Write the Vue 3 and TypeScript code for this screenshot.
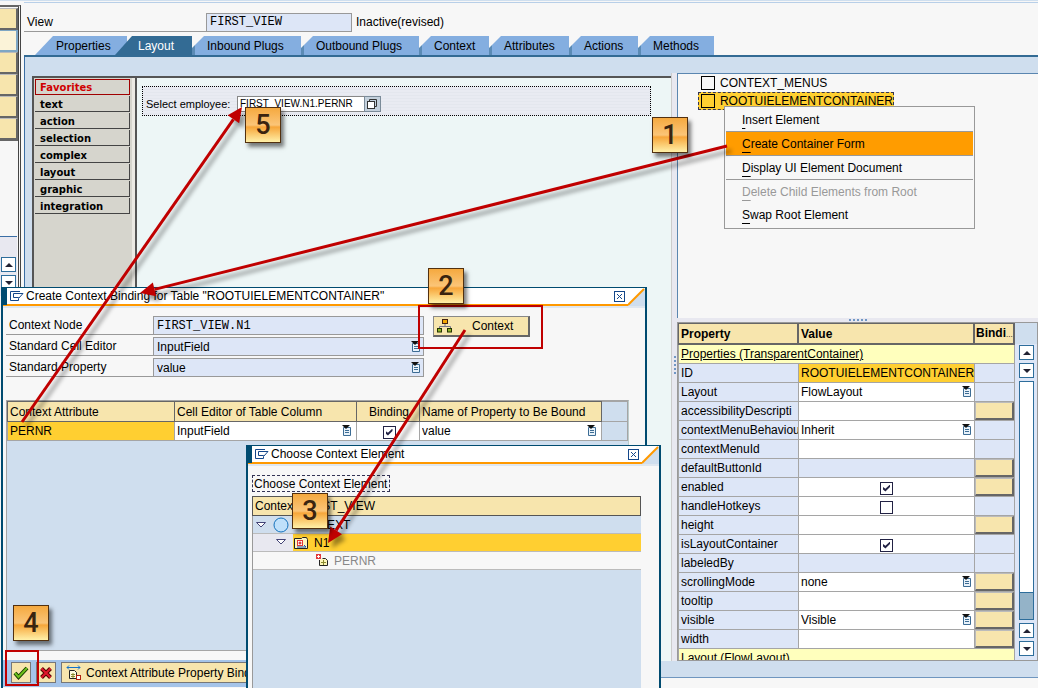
<script setup lang="ts">
import { ref } from 'vue'

interface PropertyRow {
  name: string
  kind: 'id' | 'select' | 'text' | 'check' | 'none'
  value?: string
  checked?: boolean
  bind: boolean
}

interface MenuEntry {
  label: string
  state?: 'active' | 'disabled'
  ruled?: boolean
}

const tabs = ['Properties', 'Layout', 'Inbound Plugs', 'Outbound Plugs', 'Context', 'Attributes', 'Actions', 'Methods']
const activeTab = ref('Layout')

const palette = ['Favorites', 'text', 'action', 'selection', 'complex', 'layout', 'graphic', 'integration']

const menu: MenuEntry[] = [
  { label: 'Insert Element', ruled: true },
  { label: 'Create Container Form', state: 'active', ruled: true },
  { label: 'Display UI Element Document', ruled: true },
  { label: 'Delete Child Elements from Root', state: 'disabled' },
  { label: 'Swap Root Element' },
]

const rows: PropertyRow[] = [
  { name: 'ID', kind: 'id', value: 'ROOTUIELEMENTCONTAINER', bind: false },
  { name: 'Layout', kind: 'select', value: 'FlowLayout', bind: false },
  { name: 'accessibilityDescripti', kind: 'text', bind: true },
  { name: 'contextMenuBehaviou', kind: 'select', value: 'Inherit', bind: false },
  { name: 'contextMenuId', kind: 'text', bind: false },
  { name: 'defaultButtonId', kind: 'none', bind: true },
  { name: 'enabled', kind: 'check', checked: true, bind: true },
  { name: 'handleHotkeys', kind: 'check', checked: false, bind: false },
  { name: 'height', kind: 'text', bind: true },
  { name: 'isLayoutContainer', kind: 'check', checked: true, bind: false },
  { name: 'labeledBy', kind: 'none', bind: false },
  { name: 'scrollingMode', kind: 'select', value: 'none', bind: true },
  { name: 'tooltip', kind: 'text', bind: true },
  { name: 'visible', kind: 'select', value: 'Visible', bind: true },
  { name: 'width', kind: 'text', bind: true },
]

const steps = [
  { n: 1, x: 652, y: 117 },
  { n: 2, x: 428, y: 268 },
  { n: 3, x: 292, y: 493 },
  { n: 4, x: 13, y: 605 },
  { n: 5, x: 245, y: 107 },
]

const arrows = [
  { x1: 727, y1: 146, x2: 140, y2: 293 },
  { x1: 22, y1: 422, x2: 242, y2: 107 },
  { x1: 465, y1: 330, x2: 328, y2: 543 },
].map((a) => {
  const len = Math.hypot(a.x2 - a.x1, a.y2 - a.y1)
  const ux = (a.x2 - a.x1) / len
  const uy = (a.y2 - a.y1) / len
  const bx = a.x2 - ux * 15
  const by = a.y2 - uy * 15
  return {
    ...a,
    bx,
    by,
    head: `${a.x2},${a.y2} ${bx - uy * 7},${by + ux * 7} ${bx + uy * 7},${by - ux * 7}`,
  }
})
</script>

<template>
  <div class="page">
    <aside class="rail">
      <div class="rail-buttons">
        <button v-for="n in 6" :key="n" type="button" :class="{ lit: n === 2 }" :aria-label="'Tool ' + n"></button>
      </div>
      <div class="rail-scroll">
        <button type="button" class="arrow up" aria-label="Scroll up"></button>
        <button type="button" class="arrow down" aria-label="Scroll down"></button>
      </div>
    </aside>

    <main class="main">
      <header class="view-row">
        <label for="view">View</label>
        <input id="view" class="mono" type="text" value="FIRST_VIEW" readonly />
        <span>Inactive(revised)</span>
      </header>

      <nav class="tabs">
        <button v-for="t in tabs" :key="t" type="button" :class="{ active: t === activeTab }" @click="activeTab = t">{{ t }}</button>
      </nav>

      <section class="bench">
        <div class="designer">
          <div class="palette">
            <button v-for="(p, i) in palette" :key="p" type="button" :class="{ fav: i === 0 }">{{ p }}</button>
          </div>
          <div class="canvas">
            <div class="container-box">
              <label for="emp">Select employee:</label>
              <input id="emp" type="text" value="FIRST_VIEW.N1.PERNR" />
              <button type="button" aria-label="Value help">
                <svg width="12" height="12" viewBox="0 0 12 12"><path d="M3.500 3V1.500h7v7H9" fill="none" stroke="#333" /><rect x="1.500" y="3.500" width="7" height="7" fill="#fff" stroke="#333" /></svg>
              </button>
            </div>
          </div>
        </div>

        <div class="v-split"><i></i></div>

        <div class="side">
          <div class="tree">
            <div class="tree-row"><span class="box"></span>CONTEXT_MENUS</div>
            <div class="tree-row selected"><span class="box"></span>ROOTUIELEMENTCONTAINER</div>
            <div class="menu" role="menu">
              <button v-for="m in menu" :key="m.label" type="button" role="menuitem" :class="[m.state, { ruled: m.ruled }]" :disabled="m.state === 'disabled'">
                <u>{{ m.label[0] }}</u>{{ m.label.slice(1) }}
              </button>
            </div>
          </div>
          <div class="h-split"><i></i></div>
          <div class="props">
            <table>
              <colgroup><col class="c-name" /><col /><col class="c-bind" /></colgroup>
              <thead>
                <tr><th>Property</th><th>Value</th><th>Bindi<small>...</small></th></tr>
              </thead>
              <tbody>
                <tr class="group"><td colspan="3"><span>Properties (TransparentContainer)</span></td></tr>
                <tr v-for="r in rows" :key="r.name">
                  <td :id="'p-' + r.name" class="name">{{ r.name }}</td>
                  <td v-if="r.kind === 'id'" class="id">{{ r.value }}</td>
                  <td v-else-if="r.kind === 'select'" class="edit">
                    <span class="pick">
                      <select :aria-labelledby="'p-' + r.name"><option>{{ r.value }}</option></select>
                      <svg width="10" height="12" viewBox="0 0 10 12"><path d="M1.500 2.500V10.500H8.500V2.500z" fill="#e8f2fa" stroke="#3c6c94" /><path d="M0 0h8L4 4z" fill="#111" /><path d="M3 5.500h4M3 7.500h4" stroke="#3c6c94" /></svg>
                    </span>
                  </td>
                  <td v-else-if="r.kind === 'check'" class="edit center"><input type="checkbox" :checked="r.checked" :aria-labelledby="'p-' + r.name" /></td>
                  <td v-else-if="r.kind === 'text'" class="edit"><input type="text" :aria-labelledby="'p-' + r.name" /></td>
                  <td v-else></td>
                  <td class="bind"><button v-if="r.bind" type="button" :aria-label="'Bind ' + r.name"></button></td>
                </tr>
                <tr class="group"><td colspan="3"><span>Layout (FlowLayout)</span></td></tr>
              </tbody>
            </table>
            <div class="scroll">
              <button type="button" class="arrow up" aria-label="Scroll up"></button>
              <button type="button" class="arrow down" aria-label="Scroll down"></button>
              <div class="track"><div class="thumb"></div></div>
              <button type="button" class="arrow up" aria-label="Scroll up"></button>
              <button type="button" class="arrow down" aria-label="Scroll down"></button>
            </div>
          </div>
        </div>
      </section>
    </main>

    <section class="dialog binding" role="dialog" aria-label="Create Context Binding">
      <header class="title">
        <b></b>
        <div class="bar">
          <svg width="15" height="12" viewBox="0 0 15 12" fill="none" stroke="#14478a"><path d="M11 1.500H1.500v9h8V9" /><path d="M4.500 3.500h9.500L9.500 8.500V7.500h-5z" fill="#fff" /></svg>
          <span>Create Context Binding for Table "ROOTUIELEMENTCONTAINER"</span>
          <button type="button" aria-label="Close"><svg width="11" height="11" viewBox="0 0 11 11"><path d="M3 3l5 5M8 3l-5 5" stroke="#14478a" /></svg></button>
        </div>
        <svg class="corner" width="17" height="18" viewBox="0 0 17 18"><path d="M0 0H17L0 17z" fill="#fff" /><path d="M0 17L16 1" stroke="#f90" stroke-width="2" /></svg>
      </header>
      <div class="form">
        <div class="fields">
          <div class="field"><label for="node">Context Node</label><input id="node" class="mono" type="text" value="FIRST_VIEW.N1" readonly /></div>
          <div class="field">
            <label for="editor">Standard Cell Editor</label>
            <span class="pick"><select id="editor"><option>InputField</option></select><svg width="10" height="12" viewBox="0 0 10 12"><path d="M1.500 2.500V10.500H8.500V2.500z" fill="#e8f2fa" stroke="#3c6c94" /><path d="M0 0h8L4 4z" fill="#111" /><path d="M3 5.500h4M3 7.500h4" stroke="#3c6c94" /></svg></span>
          </div>
          <div class="field">
            <label for="prop">Standard Property</label>
            <span class="pick"><select id="prop"><option>value</option></select><svg width="10" height="12" viewBox="0 0 10 12"><path d="M1.500 2.500V10.500H8.500V2.500z" fill="#e8f2fa" stroke="#3c6c94" /><path d="M0 0h8L4 4z" fill="#111" /><path d="M3 5.500h4M3 7.500h4" stroke="#3c6c94" /></svg></span>
          </div>
        </div>
        <button type="button" class="context-btn">
          <svg width="16" height="14" viewBox="0 0 16 14"><path d="M8 5v3M2.500 9.500V7.500h11v2" fill="none" stroke="#778" /><rect x="5.500" y=".5" width="5" height="4" fill="#f5a800" stroke="#421" /><rect x=".5" y="9.500" width="4" height="3.500" fill="#8fb52a" stroke="#230" /><rect x="10.500" y="9.500" width="4" height="3.500" fill="#8fb52a" stroke="#230" /></svg>
          <span>Context</span>
        </button>
      </div>
      <div class="grid-area">
        <table>
          <thead>
            <tr><th class="g1">Context Attribute</th><th class="g2">Cell Editor of Table Column</th><th class="g3">Binding</th><th class="g4">Name of Property to Be Bound</th><td></td></tr>
          </thead>
          <tbody>
            <tr>
              <td class="key">PERNR</td>
              <td class="edit"><span class="pick"><select aria-label="Cell Editor of Table Column"><option>InputField</option></select><svg width="10" height="12" viewBox="0 0 10 12"><path d="M1.500 2.500V10.500H8.500V2.500z" fill="#e8f2fa" stroke="#3c6c94" /><path d="M0 0h8L4 4z" fill="#111" /><path d="M3 5.500h4M3 7.500h4" stroke="#3c6c94" /></svg></span></td>
              <td class="edit center"><input type="checkbox" checked aria-label="Binding" /></td>
              <td class="edit"><span class="pick"><select aria-label="Name of Property to Be Bound"><option>value</option></select><svg width="10" height="12" viewBox="0 0 10 12"><path d="M1.500 2.500V10.500H8.500V2.500z" fill="#e8f2fa" stroke="#3c6c94" /><path d="M0 0h8L4 4z" fill="#111" /><path d="M3 5.500h4M3 7.500h4" stroke="#3c6c94" /></svg></span></td>
              <td></td>
            </tr>
          </tbody>
        </table>
      </div>
      <footer class="actions">
        <button type="button" aria-label="Continue">
          <svg width="16" height="14" viewBox="0 0 16 14"><path d="M2 7l3.500 4L14 2" fill="none" stroke="#143c00" stroke-width="4" /><path d="M2 7l3.500 4L14 2" fill="none" stroke="#6cc01c" stroke-width="2" /></svg>
        </button>
        <button type="button" aria-label="Cancel">
          <svg width="12" height="12" viewBox="0 0 12 12"><path d="M1.500 1.500l9 9M10.500 1.500l-9 9" stroke="#500" stroke-width="4" /><path d="M1.500 1.500l9 9M10.500 1.500l-9 9" stroke="#e0162c" stroke-width="2" /></svg>
        </button>
        <button type="button" class="wide">
          <svg width="16" height="15" viewBox="0 0 16 15"><path d="M1 2.500h13M3 .5l-2 2 2 2M12 .5l2 2-2 2" fill="none" stroke="#1473c8" /><path d="M3.500 5.500h5l2 2v6h-7z" fill="#fdfbe0" stroke="#222" /><path d="M5 9.500h4M5 11.500h4M7 8v5" stroke="#8a8a30" /><rect x="10.500" y="10.500" width="4" height="4" fill="#fff" stroke="#b02010" /></svg>
          <span>Context Attribute Property Binding</span>
        </button>
      </footer>
    </section>

    <section class="dialog chooser" role="dialog" aria-label="Choose Context Element">
      <header class="title">
        <b></b>
        <div class="bar">
          <svg width="15" height="12" viewBox="0 0 15 12" fill="none" stroke="#14478a"><path d="M11 1.500H1.500v9h8V9" /><path d="M4.500 3.500h9.500L9.500 8.500V7.500h-5z" fill="#fff" /></svg>
          <span>Choose Context Element</span>
          <button type="button" aria-label="Close"><svg width="11" height="11" viewBox="0 0 11 11"><path d="M3 3l5 5M8 3l-5 5" stroke="#14478a" /></svg></button>
        </div>
        <svg class="corner" width="17" height="18" viewBox="0 0 17 18"><path d="M0 0H17L0 17z" fill="#fff" /><path d="M0 17L16 1" stroke="#f90" stroke-width="2" /></svg>
      </header>
      <div class="chooser-body">
        <span class="caption">Choose Context Element</span>
        <div class="nodes">
          <div class="node-head">Context: FIRST_VIEW</div>
          <div class="node root">
            <svg width="12" height="10" viewBox="0 0 12 10"><path d="M1.500 2.500h9L6 7z" fill="#fff" stroke="#447" /></svg>
            <svg class="circle" width="16" height="16" viewBox="0 0 16 16"><circle cx="8" cy="8" r="7" fill="#bfe0fa" stroke="#1572bc" /></svg>
            <span>CONTEXT</span>
          </div>
          <div class="node n1">
            <i><svg width="12" height="10" viewBox="0 0 12 10"><path d="M1.500 2.500h9L6 7z" fill="#fff" stroke="#447" /></svg></i>
            <div>
              <svg width="16" height="14" viewBox="0 0 16 14"><path d="M1.500 12.500v-10h7l1-1h4l1 2v9z" fill="#fff6c0" stroke="#222" /><rect x="4.500" y="4.500" width="5" height="5" fill="#fff" stroke="#e23a3a" /><path d="M7 5.500v3M5.500 7h3" stroke="#c00" /><path d="M4 11h9M11 9l2 2" stroke="#1453b8" /></svg>
              <span>N1</span>
            </div>
          </div>
          <div class="node leaf">
            <svg width="13" height="13" viewBox="0 0 13 13"><rect width="5" height="5" fill="#e23a3a" /><path d="M2.500 1v3M1 2.500h3" stroke="#fff" /><path d="M3.500 6v5.500h8v-5l-2-2H6.500" fill="#fdf6b8" stroke="#222" /><path d="M5 8.500h5M7.500 6v5" stroke="#8a8a30" /></svg>
            <span>PERNR</span>
          </div>
        </div>
      </div>
    </section>

    <svg class="marks" aria-hidden="true">
      <g fill="none" stroke="#c00000" stroke-width="2">
        <rect x="419" y="306" width="123" height="42" />
        <rect x="6" y="651" width="32" height="34" />
      </g>
      <g class="arrows">
        <g v-for="(a, i) in arrows" :key="i">
          <line :x1="a.x1" :y1="a.y1" :x2="a.bx" :y2="a.by" stroke="#c00000" stroke-width="3" />
          <polygon :points="a.head" fill="#c00000" />
        </g>
      </g>
    </svg>
    <div v-for="s in steps" :key="s.n" class="badge" :style="{ left: s.x + 'px', top: s.y + 'px' }">{{ s.n }}</div>
  </div>
</template>

<style>
body { margin: 0; }
</style>

<style scoped>
* { box-sizing: border-box; }
.page {
  position: relative; display: flex; height: 100vh; overflow: hidden; background: #f7f7f7; color: #000;
  font: 12px/16px "Liberation Sans", Arial, sans-serif;
  border-top: 1px solid #cfdfef;
}
button, input, select { font: inherit; color: inherit; margin: 0; padding: 0; border: 0; border-radius: 0; background: none; appearance: none; outline: 0; }
button { cursor: pointer; }
svg { display: block; flex: none; }
.mono { font-family: "Liberation Mono", "Courier New", monospace; }

.rail { flex: 0 0 21px; margin-top: 4px; border-top: 2px solid #666; border-right: 3px double #444; display: flex; flex-direction: column; }
.rail-buttons { display: flex; flex-direction: column; padding-top: 1px; border-bottom: 1px solid #666; }
.rail-buttons button { height: 22px; background: #f7e5ad; border-right: 2px solid #666; border-bottom: 2px solid #666; border-top: 1px solid #bbb; }
.rail-buttons button.lit { background: #fbf3d8; border-color: #7ea6c4; }
.rail-scroll { margin-top: 95px; border-top: 1px solid #3a6ea5; padding: 20px 2px 0 1px; background: #e8e8f0; display: flex; flex-direction: column; gap: 3px; height: 60px; width: 17px; }

.arrow { width: 15px; height: 15px; flex: none; background: #fff; border: 1px solid #2d6d9b; display: flex; align-items: center; justify-content: center; }
.arrow::before { content: ""; border: 4px solid transparent; }
.arrow.up::before { border-bottom: 4px solid #223; border-top: 0; }
.arrow.down::before { border-top: 4px solid #223; border-bottom: 0; }

.main { flex: 1; min-width: 0; display: flex; flex-direction: column; margin: 1px 0 10px 3px; border-top: 1px solid #b8cfe8; }
.view-row { display: flex; margin-top: 10px; height: 19px; line-height: 19px; }
.view-row label { width: 182px; padding-left: 3px; border-bottom: 1px solid #999; }
.view-row input { width: 146px; padding: 0 3px; background: #dde6f7; border: 1px solid #999; }
.view-row span { padding-left: 4px; }

.tabs { display: grid; grid-template-columns: 80px 77px 109px 118px 70px 80px 69px 76px; height: 19px; margin-top: 4px; padding-left: 11px; box-sizing: content-box; border-bottom: 2px solid #336b94; }
.tabs button { text-align: left; padding-left: 15px; height: 19px; white-space: nowrap; background: linear-gradient(90deg, #5b8bb5 3px, #84aee0 3px); clip-path: polygon(0 12px, 12px 0, 100% 0, 100% 100%, 0 100%); }
.tabs button:first-child { padding-left: 21px; margin-right: -12px; background: #84aee0; clip-path: polygon(0 100%, 18px 0, 100% 0, 100% 100%); }
.tabs button.active { padding-left: 23px; background: #336b94; color: #fff; clip-path: polygon(0 100%, 17px 0, 100% 0, 100% 100%); }

.bench { flex: 1; min-height: 0; display: flex; background: #cfdeee; border-left: 1px solid #3a6ea5; border-bottom: 1px solid #6f96bf; padding: 16px 0 16px 7px; }
.designer { flex: 1; min-width: 0; margin-top: 3px; display: flex; border-top: 2px solid #555; border-left: 2px solid #555; }
.palette { flex: 0 0 103px; background: #d6d5cd; border-right: 2px solid #555; padding: 1px 4px 0 1px; box-shadow: inset -3px 0 #eceae4; }
.palette button { display: block; width: 95px; height: 16px; margin-bottom: 1px; padding: 2px 0 0 5px; text-align: left; font: bold 10px/13px "DejaVu Sans", Verdana, sans-serif; border-right: 1px solid #444; border-bottom: 1px solid #444; }
.palette button.fav { color: #d00000; border: 1px solid #a00000; padding: 1px 0 0 4px; }
.canvas { flex: 1; min-width: 0; background: #edf6f6; padding: 8px 20px 0 5px; }
.container-box { display: flex; align-items: center; height: 30px; padding: 6px 3px 0; border: 1px dotted #000; background: repeating-linear-gradient(#e9ebf2 0 2px, #e4e7ee 2px 3px); font-size: 11px; }
.container-box label { width: 91px; white-space: nowrap; }
.container-box input { width: 128px; height: 16px; padding: 0 2px; font-size: 10px; background: #fff; border: 1px solid #888; }
.container-box button { width: 17px; height: 16px; margin-left: -1px; padding: 1px; background: #c3d0dc; border: 1px solid #7b8b99; }

.v-split { flex: 0 0 6px; background: #e8e8f0; border-left: 1px solid #ccc; display: flex; align-items: center; }
.v-split i { width: 2px; height: 18px; margin: 0 0 4px 2px; background: repeating-linear-gradient(#6f96c4 0 2px, transparent 2px 4px); }
.side { flex: 0 0 361px; min-width: 0; display: flex; flex-direction: column; }
.tree { position: relative; flex: 0 0 245px; background: #f7f7f7; border-top: 1px solid #5a86b0; border-left: 1px solid #5a86b0; padding: 0 0 0 20px; }
.tree-row { display: flex; align-items: center; gap: 5px; width: 196px; height: 18px; padding-left: 2px; border: 1px solid transparent; }
.tree-row.selected { background: #ffcf31; border: 1px dashed #335; }
.box { width: 14px; height: 14px; border: 1px solid #000; }
.menu { position: absolute; left: 46px; top: 32px; width: 251px; border: 1px solid #999; background: #f7f7f7; padding: 1px 1px 2px; }
.menu button { display: block; width: 100%; height: 23px; padding-left: 16px; text-align: left; line-height: 22px; white-space: nowrap; }
.menu button.ruled { height: 24px; border-bottom: 1px solid #999; }
.menu button.active { background: #ff9c00; }
.menu button.disabled { color: #999; }
.menu u { text-underline-offset: 4px; }
.h-split { flex: 0 0 4px; background: #e8e8f0; display: flex; justify-content: center; align-items: center; }
.h-split i { width: 18px; height: 2px; background: repeating-linear-gradient(90deg, #6f96c4 0 2px, transparent 2px 4px); }

.props { flex: 1; min-height: 0; overflow: hidden; display: flex; align-items: stretch; border: 1px solid #999; background: #dde6f7; }
.props table { flex: 1; min-width: 0; height: 0; border-collapse: collapse; table-layout: fixed; width: 100%; }
.c-name { width: 120px; }
.c-bind { width: 40px; }
td, th { padding: 0; font-weight: normal; text-align: left; overflow: hidden; white-space: nowrap; }
.props td { height: 19px; border: 1px solid #a5a5a5; line-height: 16px; padding: 0 2px; }
.props th { height: 20px; padding: 0 2px; background: #f7e5ad; border: 1px solid #666; box-shadow: inset -1px -1px #666; font-weight: bold; line-height: 18px; }
.props th:last-child { padding: 0 0 0 1px; }
.props small { font-size: 8px; font-weight: normal; }
.props .group td { background: #ffffbd; text-decoration: underline; }
.props .id { background: #ffcf31; padding-right: 0; }
.props td.name { padding-right: 0; }
.props .edit { background: #fff; }
.props .edit .pick { padding-right: 0; }
.props .edit input[type="text"] { width: 100%; height: 16px; display: block; }
.props td.bind { padding: 0; }
.props .bind button { display: block; width: 100%; height: 18px; background: #f7e5ad; border: 1px solid #bbb; border-right: 2px solid #666; border-bottom: 2px solid #666; }
td.center { text-align: center; }
input[type="checkbox"] { position: relative; display: block; width: 13px; height: 13px; margin: 2px auto 0; background: #fff; border: 1px solid #224; }
input[type="checkbox"]:checked::after { content: ""; position: absolute; inset: 2px; background: #224; clip-path: polygon(0 35%, 35% 60%, 100% 0, 100% 35%, 35% 100%, 0 70%); }
.pick { display: flex; align-items: center; width: 100%; padding-right: 4px; }
.pick select { flex: 1; min-width: 0; height: 17px; line-height: 16px; }

.scroll { flex: 0 0 22px; padding: 22px 3px 4px 4px; display: flex; flex-direction: column; gap: 3px; background: linear-gradient(#cfdeee 21px, #dde6f7 21px); }
.track { flex: 1; width: 15px; background: #fff; border: 1px solid #2d6d9b; display: flex; flex-direction: column; justify-content: flex-end; }
.thumb { height: 27px; background: #94b3c8; border-top: 1px solid #2d6d9b; }

.dialog { position: absolute; bottom: 0; display: flex; flex-direction: column; background: #f7f7f7; border: 1px solid #004b70; border-bottom: 0; border-width: 1px 2px 0; }
.binding { left: 1px; top: 286px; width: 646px; }
.chooser { left: 246px; top: 444px; width: 415px; }
.title { display: flex; height: 18px; background: #cfdeee; box-shadow: 0 2px #dfe7f0; }
.title b { width: 4px; background: #004b70; border-bottom: 1px solid #f90; }
.title .bar { flex: 1; display: flex; align-items: center; gap: 2px; padding: 0 3px 0 2px; background: #fff; border-bottom: 2px solid #f90; white-space: nowrap; }
.title .bar button { margin-left: auto; border: 1px solid #14478a; height: 11px; width: 11px; display: flex; align-items: center; justify-content: center; }

.form { display: flex; align-items: flex-start; gap: 9px; padding: 10px 3px 0; }
.fields { width: 418px; display: flex; flex-direction: column; gap: 2px; }
.field { display: flex; height: 19px; }
.field label { width: 147px; padding-left: 3px; line-height: 19px; border-bottom: 1px solid #999; }
.field input, .field .pick { flex: 1; width: auto; min-width: 0; background: #dde6f7; border: 1px solid #999; padding-left: 3px; }
.field .pick { padding-right: 2px; }
.context-btn { display: flex; align-items: center; width: 97px; height: 21px; padding-left: 3px; background: #f7e5ad; border: 1px solid #888; border-right: 2px solid #666; border-bottom: 2px solid #666; }
.context-btn span { padding-left: 19px; }

.grid-area { flex: 1; margin: 23px 16px 0 3px; background: #cfdeee; border: 1px solid #a5a5a5; border-right-color: #bcc; }
.grid-area table { width: 100%; border-collapse: collapse; table-layout: fixed; }
.grid-area th { height: 20px; padding-left: 2px; background: #f7e5ad; border: 1px solid #666; line-height: 18px; }
.grid-area td { height: 19px; padding-left: 2px; border: 1px solid #a5a5a5; }
.grid-area td.key { background: #ffcf31; }
.grid-area td.edit { background: #fff; }
.g1 { width: 167px; }
.g2 { width: 182px; }
.g3 { width: 63px; }
.g4 { width: 182px; }
.grid-area .g3 { text-align: center; }

.actions { display: flex; gap: 5px; height: 28px; margin-top: 9px; padding: 2px 0 0 8px; background: #a5c4e9; border-bottom: 1px solid #f7f7f7; }
.actions button { flex: none; display: flex; align-items: center; justify-content: center; width: 20px; height: 21px; background: #f7e5ad; border: 1px solid #777; }
.actions .wide { width: 220px; justify-content: flex-start; padding-left: 4px; gap: 4px; }

.chooser-body { flex: 1; min-height: 0; display: flex; flex-direction: column; align-items: flex-start; padding: 11px 18px 0 4px; }
.caption { border: 1px dashed #335; padding: 0 2px 0 1px; height: 17px; line-height: 16px; }
.nodes { flex: 1; align-self: stretch; margin-top: 4px; background: #cfdeee; border-left: 1px solid #999; }
.node-head { height: 20px; padding-left: 2px; line-height: 18px; background: #f7e5ad; border: 1px solid #555; margin-left: -1px; }
.node { display: flex; align-items: center; height: 18px; border-bottom: 1px solid #bbb; }
.root { padding-left: 2px; gap: 4px; }
.root .circle { margin-left: 2px; }
.n1 i { width: 40px; height: 17px; padding: 3px 0 0 22px; background: #e8e8f0; }
.n1 div { flex: 1; height: 17px; display: flex; align-items: center; gap: 5px; background: #ffcf31; }
.leaf { padding-left: 63px; gap: 5px; background: #f7f7f7; color: #888; }

.marks { position: absolute; inset: -1px 0 0; width: 100%; height: 100%; pointer-events: none; }
.arrows { filter: drop-shadow(4px 5px 2px rgba(0, 0, 0, 0.4)); }
.badge {
  position: absolute; width: 36px; height: 36px; margin-top: -1px; border: 1px solid #52300f; text-align: center;
  font: 500 27px/34px Roboto, "Liberation Sans", sans-serif; color: #3a2410;
  background: linear-gradient(#f5a93f, #fbc578 50%, #f7a63a 56%, #fff0a8);
  box-shadow: 3px 4px 4px rgba(0, 0, 0, 0.5);
}
</style>
